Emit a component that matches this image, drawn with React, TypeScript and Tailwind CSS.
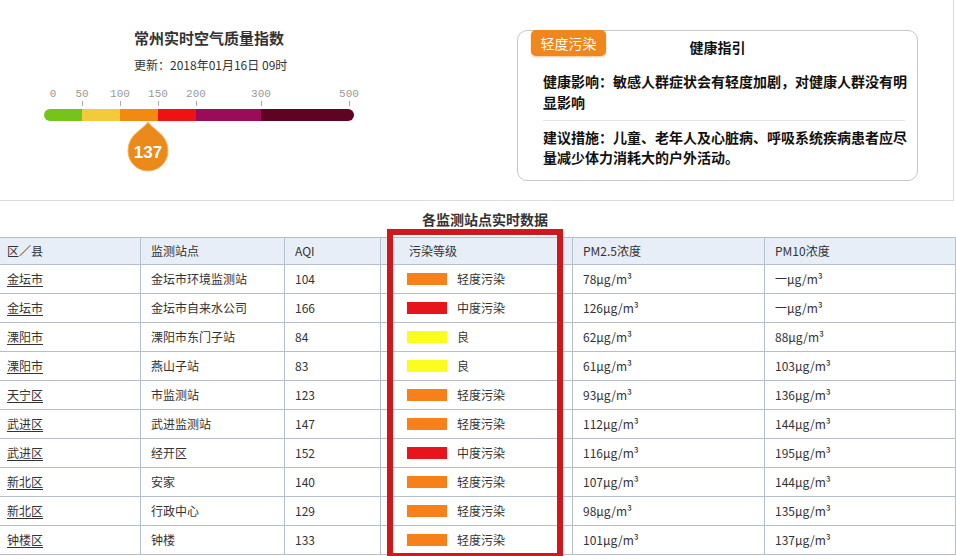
import React from "react"

type Row = {
  area: string
  site: string
  aqi: number
  level: "light" | "medium" | "good"
  pm25: string
  pm10: string
}

const rows: Row[] = [
  { area: "金坛市", site: "金坛市环境监测站", aqi: 104, level: "light", pm25: "78", pm10: "一" },
  { area: "金坛市", site: "金坛市自来水公司", aqi: 166, level: "medium", pm25: "126", pm10: "一" },
  { area: "溧阳市", site: "溧阳市东门子站", aqi: 84, level: "good", pm25: "62", pm10: "88" },
  { area: "溧阳市", site: "燕山子站", aqi: 83, level: "good", pm25: "61", pm10: "103" },
  { area: "天宁区", site: "市监测站", aqi: 123, level: "light", pm25: "93", pm10: "136" },
  { area: "武进区", site: "武进监测站", aqi: 147, level: "light", pm25: "112", pm10: "144" },
  { area: "武进区", site: "经开区", aqi: 152, level: "medium", pm25: "116", pm10: "195" },
  { area: "新北区", site: "安家", aqi: 140, level: "light", pm25: "107", pm10: "144" },
  { area: "新北区", site: "行政中心", aqi: 129, level: "light", pm25: "98", pm10: "135" },
  { area: "钟楼区", site: "钟楼", aqi: 133, level: "light", pm25: "101", pm10: "137" },
]

const levels = {
  light: { label: "轻度污染", swatch: "bg-[#f7801a]" },
  medium: { label: "中度污染", swatch: "bg-[#e8141c]" },
  good: { label: "良", swatch: "bg-[#fcfc1e]" },
}

// scale labels, x is the centre relative to the bar's left end
const scale = [
  { v: "0", x: 9, tick: false },
  { v: "50", x: 38, tick: true },
  { v: "100", x: 76, tick: true },
  { v: "150", x: 114, tick: true },
  { v: "200", x: 152, tick: true },
  { v: "300", x: 217, tick: true },
  { v: "500", x: 305, tick: true },
]

const segments = [
  { w: "w-[38px]", c: "bg-[#74c41c]" },
  { w: "w-[38px]", c: "bg-[#f5ca3a]" },
  { w: "w-[38px]", c: "bg-[#f28a12]" },
  { w: "w-[38px]", c: "bg-[#ee1212]" },
  { w: "w-[65px]", c: "bg-[#9a0c5a]" },
  { w: "w-[93px]", c: "bg-[#5e0322]" },
]

const grid = "grid grid-cols-[141px_144px_96px_192px_192px_191px]"

function Gauge() {
  return (
    <div className="relative ml-[44px] mt-[14px] w-[310px]">
      <div className="relative h-[14px] font-['Liberation_Mono',monospace] text-[11px] leading-[14px] text-[#999]">
        {scale.map((s) => (
          <span key={s.v} className="absolute top-0 -translate-x-1/2" style={{ left: s.x }}>
            {s.v}
          </span>
        ))}
      </div>
      <div className="relative h-[6px]">
        {scale.filter((s) => s.tick).map((s) => (
          <span key={s.v} className="absolute top-0 h-[5px] w-px bg-[#aaa]" style={{ left: s.x }} />
        ))}
      </div>
      <div className="mt-[2px] flex h-[12px] overflow-hidden rounded-full">
        {segments.map((s, i) => (
          <div key={i} className={`${s.w} ${s.c} h-full`} />
        ))}
      </div>
      {/* value marker */}
      <svg className="absolute left-[82px] top-[34px]" width="44" height="52" viewBox="0 0 44 52">
        <path
          d="M22 1 C27 9 42 13 42 30 A20 20 0 1 1 2 30 C2 13 17 9 22 1 Z"
          fill="#e98a1b"
          stroke="#f4b765"
          strokeWidth="1"
        />
        <text
          x="22"
          y="37"
          textAnchor="middle"
          fill="#ffffff"
          fontFamily="Liberation Sans, Arial, sans-serif"
          fontWeight="bold"
          fontSize="17"
        >
          137
        </text>
      </svg>
    </div>
  )
}

function HealthBox() {
  return (
    <div className="mt-[30px] h-[151px] w-[401px] rounded-[10px] border border-[#c6c6c6] bg-white">
      <div className="relative h-[30px]">
        <div className="absolute left-[13px] top-[-1px] flex h-[26px] w-[75px] items-center justify-center rounded-[5px] bg-[#f0861e] text-[14px] text-white shadow-[0_1px_2px_rgba(240,134,30,0.5)]">
          轻度污染
        </div>
        <div className="pt-[6px] text-center text-[14px] font-bold leading-[20px] text-[#111]">健康指引</div>
      </div>
      <div className="pl-[25px] pr-[3px] pt-[10px] text-[14px] font-semibold leading-[21px] text-[#111]">
        <p>健康影响：敏感人群症状会有轻度加剧，对健康人群没有明显影响</p>
        <div className="mb-[6px] mr-[9px] mt-[7px] h-px bg-[#e2e2e2]" />
        <p className="leading-[20px]">建议措施：儿童、老年人及心脏病、呼吸系统疾病患者应尽量减少体力消耗大的户外活动。</p>
      </div>
    </div>
  )
}

export default function App() {
  return (
    <div className="relative h-[556px] w-[956px] overflow-hidden bg-white font-['Noto_Sans_CJK_SC',sans-serif] text-[#333]">
      {/* top summary */}
      <div className="flex h-[201px] w-[954px] border-b border-r border-[#dcdcdc]">
        <div className="w-[517px] pt-[29px]">
          <div className="pl-[134px]">
            <h1 className="text-[15px] font-bold leading-[18px] text-[#333]">常州实时空气质量指数</h1>
            <p className="mt-[10px] text-[12px] leading-[16px] text-[#333]">更新：2018年01月16日 09时</p>
          </div>
          <Gauge />
        </div>
        <HealthBox />
      </div>

      {/* station table */}
      <div className="pl-[14px] pt-[9px] text-center text-[14px] font-bold leading-[18px] text-[#333]">各监测站点实时数据</div>
      <div className="mt-[9px] text-[12px] text-[#333]">
        <div className={`${grid} h-[28px] border-y border-[#b5bfcb] bg-[#e7eef8]`}>
          <div className="flex items-center border-r border-[#b5bfcb] pl-[7px]">区／县</div>
          <div className="flex items-center border-r border-[#b5bfcb] pl-[10px]">监测站点</div>
          <div className="flex items-center border-r border-[#b5bfcb] pl-[10px]">AQI</div>
          <div className="flex items-center border-r border-[#b5bfcb] pl-[28px]">污染等级</div>
          <div className="flex items-center border-r border-[#b5bfcb] pl-[10px]">PM2.5浓度</div>
          <div className="flex items-center border-r border-[#b5bfcb] pl-[10px]">PM10浓度</div>
        </div>
        {rows.map((r, i) => (
          <div key={i} className={`${grid} h-[29px] border-b border-[#b5bfcb]`}>
            <div className="flex items-center border-r border-[#b5bfcb] pl-[7px]">
              <span className="underline underline-offset-2">{r.area}</span>
            </div>
            <div className="flex items-center border-r border-[#b5bfcb] pl-[10px]">{r.site}</div>
            <div className="flex items-center border-r border-[#b5bfcb] pl-[10px]">{r.aqi}</div>
            <div className="flex items-center gap-[10px] border-r border-[#b5bfcb] pl-[26px]">
              <span className={`h-[12px] w-[40px] ${levels[r.level].swatch}`} />
              <span>{levels[r.level].label}</span>
            </div>
            <div className="flex items-center border-r border-[#b5bfcb] pl-[10px]">{r.pm25}μg/m³</div>
            <div className="flex items-center border-r border-[#b5bfcb] pl-[10px]">{r.pm10}μg/m³</div>
          </div>
        ))}
      </div>

      {/* highlight frame over the level column */}
      <div className="pointer-events-none absolute left-[387px] top-[229px] h-[330px] w-[176px] border-[6px] border-[#d0181c]" />
    </div>
  )
}
